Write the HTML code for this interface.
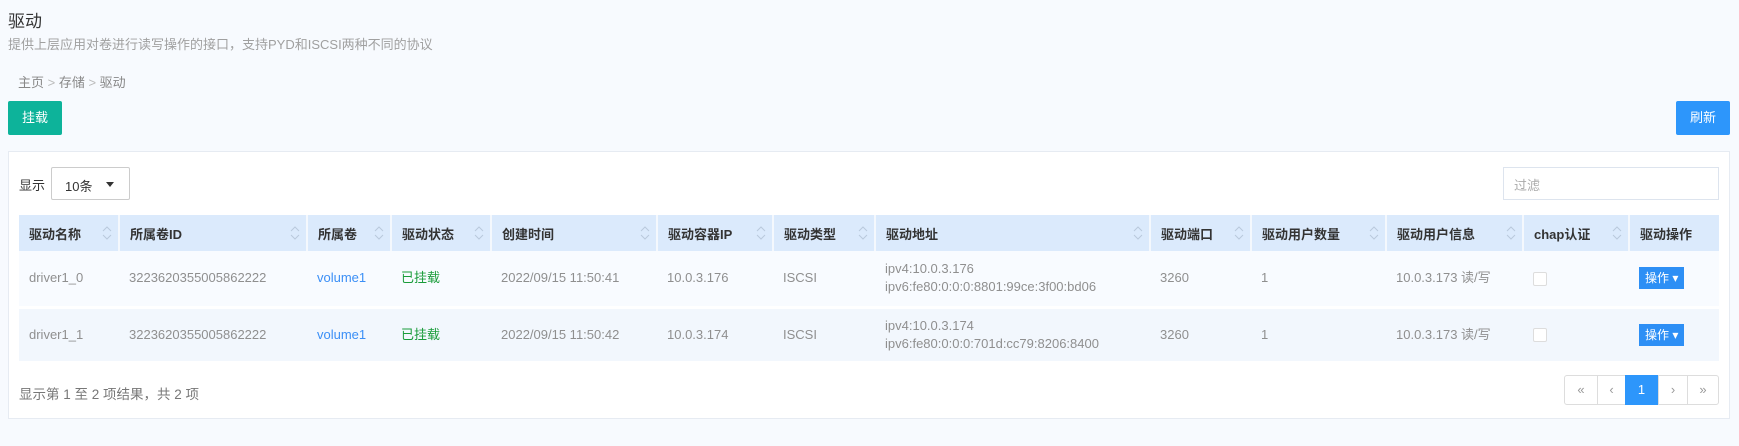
<!DOCTYPE html>
<html><head><meta charset="utf-8"><style>
*{margin:0;padding:0;box-sizing:border-box}
body{width:1739px;height:446px;background:#f7fafe;font-family:"Liberation Sans","Noto Sans CJK SC",sans-serif;font-size:13px;color:#777;position:relative;overflow:hidden}
.a{position:absolute;white-space:nowrap}
.btn{position:absolute;color:#fff;font-size:13px;text-align:center;border-radius:2px}
table{position:absolute;left:19px;top:215px;border-collapse:collapse;table-layout:fixed;width:1700px}
th{height:36px;background:#dbeafc;color:#333;font-weight:bold;text-align:left;padding-left:10px;border-right:2px solid #f4f8fd;position:relative;font-size:13px}
th:last-child{border-right:none}
th .s{position:absolute;right:6px;top:9px;width:10px;height:18px}
td{padding-left:10px;color:#8f8f8f;font-size:13px;line-height:18px}
tr.r1 td{height:56px;background:#f8fbff;border-bottom:3px solid #fff}
tr.r2 td{height:54px;background:#f2f7fd}
.cb{display:inline-block;width:14px;height:14px;border:1px solid #ddd;background:#fff;border-radius:2px;vertical-align:middle}
.op{display:inline-block;background:#2d8ff5;color:#fff;font-size:12px;padding:0 6px;height:22px;line-height:22px}
.pg{position:absolute;top:375px;height:30px;border:1px solid #ddd;background:#fff;text-align:center;line-height:28px;color:#999;font-size:13px}
</style></head><body>
<div class="a" style="left:8px;top:7px;font-size:17px;color:#333">驱动</div>
<div class="a" style="left:8px;top:34px;font-size:13px;color:#a0a0a0">提供上层应用对卷进行读写操作的接口，支持PYD和ISCSI两种不同的协议</div>
<div class="a" style="left:18px;top:72px;font-size:13px;color:#888">主页 <span style="color:#bbb">&gt;</span> 存储 <span style="color:#bbb">&gt;</span> 驱动</div>
<div class="btn" style="left:8px;top:101px;width:54px;height:34px;line-height:34px;background:#0db39a">挂载</div>
<div class="btn" style="left:1676px;top:101px;width:54px;height:34px;line-height:34px;background:#2d96fb">刷新</div>
<div class="a" style="left:8px;top:151px;width:1722px;height:268px;background:#fff;border:1px solid #e6ebf2"></div>
<div class="a" style="left:19px;top:175px;color:#333">显示</div>
<div class="a" style="left:51px;top:167px;width:79px;height:33px;border:1px solid #ccc;border-radius:2px;background:#fff;color:#333;padding:8px 0 0 13px">10条<span style="position:absolute;left:54px;top:14px;border-left:4px solid transparent;border-right:4px solid transparent;border-top:5px solid #333"></span></div>
<div class="a" style="left:1503px;top:167px;width:216px;height:33px;border:1px solid #dde4ee;background:#fff;color:#aaa;padding:7px 0 0 10px">过滤</div>
<table>
<colgroup><col style="width:100px"><col style="width:188px"><col style="width:84px"><col style="width:100px"><col style="width:166px"><col style="width:116px"><col style="width:102px"><col style="width:275px"><col style="width:101px"><col style="width:135px"><col style="width:137px"><col style="width:106px"><col style="width:90px"></colgroup>
<tr>
<th>驱动名称<svg class="s" viewBox="0 0 10 18"><path d="M1 7L5 3L9 7M1 11L5 15L9 11" fill="none" stroke="#b9c9dc"/></svg></th>
<th>所属卷ID<svg class="s" viewBox="0 0 10 18"><path d="M1 7L5 3L9 7M1 11L5 15L9 11" fill="none" stroke="#b9c9dc"/></svg></th>
<th>所属卷<svg class="s" viewBox="0 0 10 18"><path d="M1 7L5 3L9 7M1 11L5 15L9 11" fill="none" stroke="#b9c9dc"/></svg></th>
<th>驱动状态<svg class="s" viewBox="0 0 10 18"><path d="M1 7L5 3L9 7M1 11L5 15L9 11" fill="none" stroke="#b9c9dc"/></svg></th>
<th>创建时间<svg class="s" viewBox="0 0 10 18"><path d="M1 7L5 3L9 7M1 11L5 15L9 11" fill="none" stroke="#b9c9dc"/></svg></th>
<th>驱动容器IP<svg class="s" viewBox="0 0 10 18"><path d="M1 7L5 3L9 7M1 11L5 15L9 11" fill="none" stroke="#b9c9dc"/></svg></th>
<th>驱动类型<svg class="s" viewBox="0 0 10 18"><path d="M1 7L5 3L9 7M1 11L5 15L9 11" fill="none" stroke="#b9c9dc"/></svg></th>
<th>驱动地址<svg class="s" viewBox="0 0 10 18"><path d="M1 7L5 3L9 7M1 11L5 15L9 11" fill="none" stroke="#b9c9dc"/></svg></th>
<th>驱动端口<svg class="s" viewBox="0 0 10 18"><path d="M1 7L5 3L9 7M1 11L5 15L9 11" fill="none" stroke="#b9c9dc"/></svg></th>
<th>驱动用户数量<svg class="s" viewBox="0 0 10 18"><path d="M1 7L5 3L9 7M1 11L5 15L9 11" fill="none" stroke="#b9c9dc"/></svg></th>
<th>驱动用户信息<svg class="s" viewBox="0 0 10 18"><path d="M1 7L5 3L9 7M1 11L5 15L9 11" fill="none" stroke="#b9c9dc"/></svg></th>
<th>chap认证<svg class="s" viewBox="0 0 10 18"><path d="M1 7L5 3L9 7M1 11L5 15L9 11" fill="none" stroke="#b9c9dc"/></svg></th>
<th>驱动操作</th>
</tr>
<tr class="r1"><td>driver1_0</td><td>3223620355005862222</td><td style="color:#3b8ff6">volume1</td><td style="color:#1a9c3a">已挂载</td><td>2022/09/15 11:50:41</td><td>10.0.3.176</td><td>ISCSI</td><td>ipv4:10.0.3.176<br>ipv6:fe80:0:0:0:8801:99ce:3f00:bd06</td><td>3260</td><td>1</td><td>10.0.3.173 读/写</td><td><span class="cb"></span></td><td><span class="op">操作 ▾</span></td></tr>
<tr class="r2"><td>driver1_1</td><td>3223620355005862222</td><td style="color:#3b8ff6">volume1</td><td style="color:#1a9c3a">已挂载</td><td>2022/09/15 11:50:42</td><td>10.0.3.174</td><td>ISCSI</td><td>ipv4:10.0.3.174<br>ipv6:fe80:0:0:0:701d:cc79:8206:8400</td><td>3260</td><td>1</td><td>10.0.3.173 读/写</td><td><span class="cb"></span></td><td><span class="op">操作 ▾</span></td></tr>
</table>
<div class="a" style="left:19px;top:383px;color:#777;font-size:13.5px">显示第 1 至 2 项结果，共 2 项</div>
<div class="pg" style="left:1564px;width:34px;border-radius:3px 0 0 3px">«</div>
<div class="pg" style="left:1597px;width:29px">‹</div>
<div class="pg" style="left:1625px;width:33px;background:#2d96fb;border-color:#2d96fb;color:#fff">1</div>
<div class="pg" style="left:1658px;width:30px">›</div>
<div class="pg" style="left:1687px;width:32px;border-radius:0 3px 3px 0">»</div>
</body></html>
